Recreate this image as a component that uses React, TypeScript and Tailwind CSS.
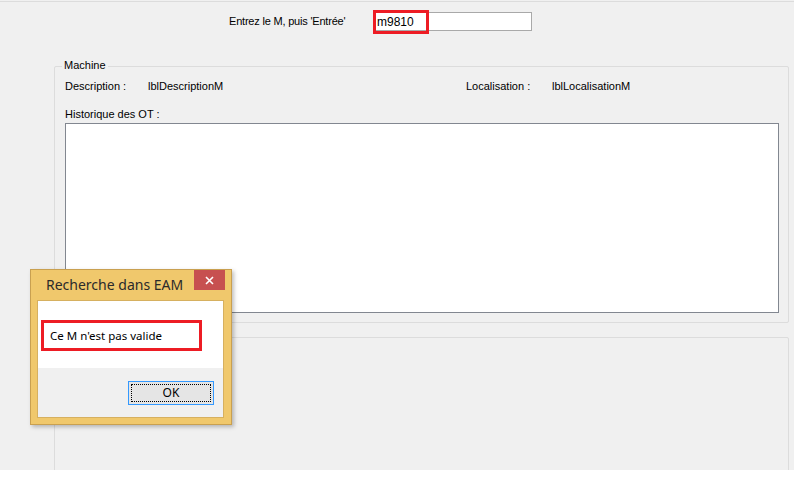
import React from "react";

export default function App() {
  const ui = { fontFamily: '"Liberation Sans", Arial, sans-serif' };
  const seg = { fontFamily: '"Noto Sans", "Liberation Sans", sans-serif' };
  return (
    <div className="w-[794px] h-[499px] bg-white relative overflow-hidden" style={ui}>
      <div className="h-[470px] bg-[#f0f0f0] overflow-hidden flex flex-col text-[11px] text-black">
        <div className="h-px mt-px bg-[#dcdcdc] shrink-0" />
        {/* header row */}
        <div className="flex items-center mt-[10px] h-[19px] shrink-0">
          <span className="ml-[229px] w-[144px] leading-[13px] tracking-[-0.2px]">Entrez le M, puis 'Entrée'</span>
          <div className="relative w-[159px] h-[19px] border border-[#a9a9a9] bg-white flex items-center pl-[3px] text-[12px]">
            m9810
            <div className="absolute left-[-1px] top-[-3px] w-[56px] h-[24px] border-[3px] border-[#ed1c24]" />
          </div>
        </div>
        {/* group Machine */}
        <div className="relative ml-[54px] mt-[35px] w-[735px] h-[257px] shrink-0 border border-[#dcdcdc] rounded-[2px] pl-[10px] pt-[13px]">
          <span className="absolute left-[7px] top-[-8px] px-[2px] bg-[#f0f0f0] leading-[13px]">Machine</span>
          <div className="flex leading-[13px]">
            <span className="w-[83px]">Description :</span>
            <span className="w-[318px]">lblDescriptionM</span>
            <span className="w-[86px]">Localisation :</span>
            <span>lblLocalisationM</span>
          </div>
          <div className="mt-[15px] leading-[13px]">Historique des OT :</div>
          <div className="mt-[2px] w-[714px] h-[190px] bg-white border border-[#828790]" />
        </div>
        {/* second group */}
        <div className="ml-[54px] mt-[14px] w-[735px] h-[200px] shrink-0 border border-[#dcdcdc] rounded-[2px]" />
      </div>

      {/* message box */}
      <div className="absolute left-[30px] top-[269px] w-[202px] h-[156px] bg-[#f0c86c] border border-[#c9a050] shadow-[2px_2px_4px_rgba(0,0,0,0.25)] flex flex-col">
        <div className="relative h-[30px] shrink-0">
          <span className="absolute left-[15px] top-[5px] text-[14px] leading-[20px] text-[#2b2b2b]" style={seg}>Recherche dans EAM</span>
          <div className="absolute right-[6px] top-0 w-[31px] h-[20px] bg-[#c75050] flex items-center justify-center">
            <svg width="9" height="9" viewBox="0 0 9 9">
              <path d="M1 1L8 8M8 1L1 8" stroke="white" strokeWidth="1.6" />
            </svg>
          </div>
        </div>
        <div className="ml-[6px] mr-[7px] h-[118px] border border-[#d6b060] flex flex-col">
          <div className="h-[67px] bg-white pt-[19px] pl-[3px]">
            <div className="w-[161px] h-[31px] border-[3px] border-[#ed1c24] flex items-center pl-[6px] text-[11.5px] text-black" style={seg}>
              Ce M n'est pas valide
            </div>
          </div>
          <div className="flex-1 bg-[#f0f0f0] pt-[13px] pl-[90px]">
            <div className="w-[86px] h-[24px] border border-[#3399ff] bg-[#e5e5e5] p-[2px]">
              <div className="w-full h-full border border-dotted border-black flex items-center justify-center text-[12px] text-black" style={seg}>
                OK
              </div>
            </div>
          </div>
        </div>
      </div>
    </div>
  );
}
